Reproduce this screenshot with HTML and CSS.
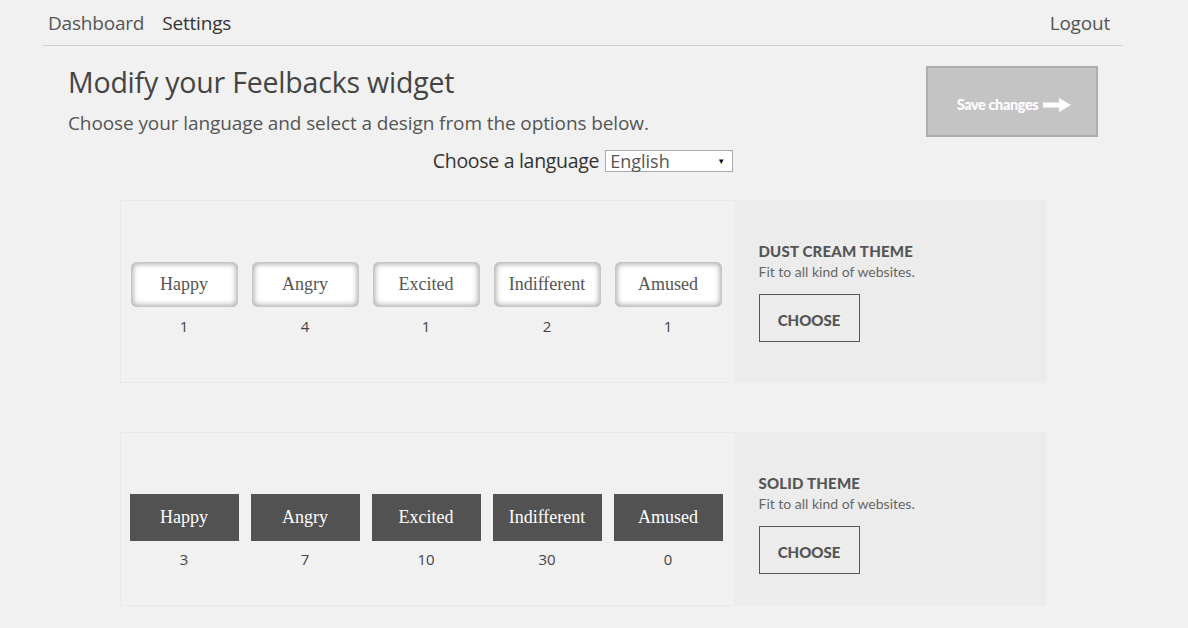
FILE: index.html
```html
<!DOCTYPE html>
<html lang="en">
<head>
  <meta charset="UTF-8" />
  <meta name="viewport" content="width=device-width, initial-scale=1.0"/>
  <title>Feelbacks - Settings</title>
  <link rel="stylesheet" href="styles.css">
</head>
<body>

  <div class="page">
    <nav class="topnav">
      <div class="nav-left">
        <a href="#">Dashboard</a>
        <a href="#" class="active">Settings</a>
      </div>
      <a href="#" class="logout">Logout</a>
    </nav>

    <div class="intro">
      <div>
        <h1>Modify your Feelbacks widget</h1>
        <p>Choose your language and select a design from the options below.</p>
      </div>
      <button class="save-btn">
        Save changes
        <svg width="28" height="14" viewBox="0 0 28 14"><path d="M0 4.5h16V0l12 7-12 7V9.5H0z" fill="#fff"/></svg>
      </button>
    </div>

    <div class="language">
      <label for="lang">Choose a language</label>
      <div class="select">
        <span>English</span>
        <span class="caret">&#9660;</span>
      </div>
    </div>

    <!-- theme cards -->
    <div class="theme theme-cream">
      <div class="preview">
        <div class="mood"><div class="mood-btn">Happy</div><span>1</span></div>
        <div class="mood"><div class="mood-btn">Angry</div><span>4</span></div>
        <div class="mood"><div class="mood-btn">Excited</div><span>1</span></div>
        <div class="mood"><div class="mood-btn">Indifferent</div><span>2</span></div>
        <div class="mood"><div class="mood-btn">Amused</div><span>1</span></div>
      </div>
      <div class="info">
        <h3>DUST CREAM THEME</h3>
        <p>Fit to all kind of websites.</p>
        <button class="choose">CHOOSE</button>
      </div>
    </div>

    <div class="theme theme-solid">
      <div class="preview">
        <div class="mood"><div class="mood-btn">Happy</div><span>3</span></div>
        <div class="mood"><div class="mood-btn">Angry</div><span>7</span></div>
        <div class="mood"><div class="mood-btn">Excited</div><span>10</span></div>
        <div class="mood"><div class="mood-btn">Indifferent</div><span>30</span></div>
        <div class="mood"><div class="mood-btn">Amused</div><span>0</span></div>
      </div>
      <div class="info">
        <h3>SOLID THEME</h3>
        <p>Fit to all kind of websites.</p>
        <button class="choose">CHOOSE</button>
      </div>
    </div>
  </div>

</body>
</html>
```

FILE: styles.css
```css
:root {
  --bg: #f1f1f1;
  --text: #444;
  --panel: #ececec;
  --dark: #525252;
}

body {
  margin: 0;
  background: var(--bg);
  color: var(--text);
  font-family: 'Open Sans', 'Noto Sans', sans-serif;
  overflow: hidden;
}

.page {
  width: 1080px;
  margin-left: 43px;
}

.topnav {
  display: flex;
  justify-content: space-between;
  align-items: center;
  height: 46px;
  border-bottom: 1px solid #cfcfcf;
  padding: 1px 13px 0 5px;
  box-sizing: border-box;
}

.topnav a {
  text-decoration: none;
  color: #555;
  font-size: 19px;
  letter-spacing: -0.2px;
}

.nav-left {
  display: flex;
  gap: 18px;
}

.topnav a.active {
  color: #333;
}

.intro {
  display: flex;
  justify-content: space-between;
  align-items: flex-start;
  padding: 18px 25px 0;
}

.intro h1 {
  margin: 0;
  font-size: 28.5px;
  font-weight: normal;
  color: #444;
  line-height: 36px;
  letter-spacing: -0.2px;
}

.intro p {
  margin: 10px 0 0;
  font-size: 19px;
  color: #555;
  letter-spacing: -0.1px;
}

.save-btn {
  width: 172px;
  height: 71px;
  background: #c4c4c4;
  border: 2px solid #adadad;
  color: #fff;
  font-family: 'Lato', sans-serif;
  font-weight: 900;
  font-size: 14.5px;
  letter-spacing: -0.4px;
  display: flex;
  align-items: center;
  justify-content: center;
  gap: 5px;
  margin-top: 2px;
  padding: 6px 0 0 4px;
}

.language {
  display: flex;
  justify-content: center;
  align-items: center;
  gap: 6px;
  margin-top: 10px;
}

.language label {
  font-size: 19.5px;
  color: #333;
  letter-spacing: -0.3px;
}

.select {
  width: 122px;
  height: 20px;
  border: 1px solid #a9a9a9;
  background: #fff;
  display: flex;
  justify-content: space-between;
  align-items: center;
  padding: 0 0 0 4px;
  font-size: 18px;
  color: #555;
}

.select .caret {
  font-size: 8px;
  color: #111;
  margin-right: 7px;
}

.theme {
  display: flex;
  width: 927px;
  margin: 26px auto 0;
}

.theme-solid {
  margin-top: 49px;
}

.preview {
  width: 614px;
  box-sizing: border-box;
  border: 1px solid #e9e9e9;
  border-right: none;
  display: flex;
  gap: 14px;
  padding: 61px 0 0 10px;
}

.theme-cream .preview {
  height: 183px;
}

.theme-solid .preview {
  height: 174px;
  gap: 12px;
  padding-left: 9px;
}

.mood {
  display: flex;
  flex-direction: column;
  align-items: center;
}

.mood span {
  margin-top: 9px;
  font-size: 15px;
  color: #444;
}

.mood-btn {
  font-family: 'Liberation Serif', 'Times New Roman', serif;
  font-size: 18px;
  text-align: center;
  box-sizing: border-box;
}

.theme-cream .mood-btn {
  width: 107px;
  height: 45px;
  line-height: 42px;
  background: #fff;
  color: #555;
  border: 1px solid #c6c6c6;
  border-radius: 5px;
  box-shadow: inset 0 0 6px rgba(0, 0, 0, 0.45);
}

.theme-solid .mood-btn {
  width: 109px;
  height: 47px;
  line-height: 46px;
  background: var(--dark);
  color: #fff;
}

.theme-solid .mood span {
  margin-top: 8px;
}

.info {
  flex: 1;
  background: var(--panel);
  padding-left: 25px;
  display: flex;
  flex-direction: column;
  justify-content: center;
  font-family: 'Lato', sans-serif;
}

.theme-solid .info {
  padding-top: 9px;
}

.info h3 {
  margin: 0;
  font-size: 15px;
  font-weight: 900;
  color: #555;
  letter-spacing: 0.2px;
}

.info p {
  margin: 3px 0 14px;
  font-size: 14px;
  color: #666;
}

.choose {
  width: 101px;
  height: 48px;
  background: transparent;
  border: 1px solid #555;
  font-family: 'Lato', sans-serif;
  font-weight: 900;
  font-size: 15px;
  color: #555;
  padding: 4px 0 0;
}
```
